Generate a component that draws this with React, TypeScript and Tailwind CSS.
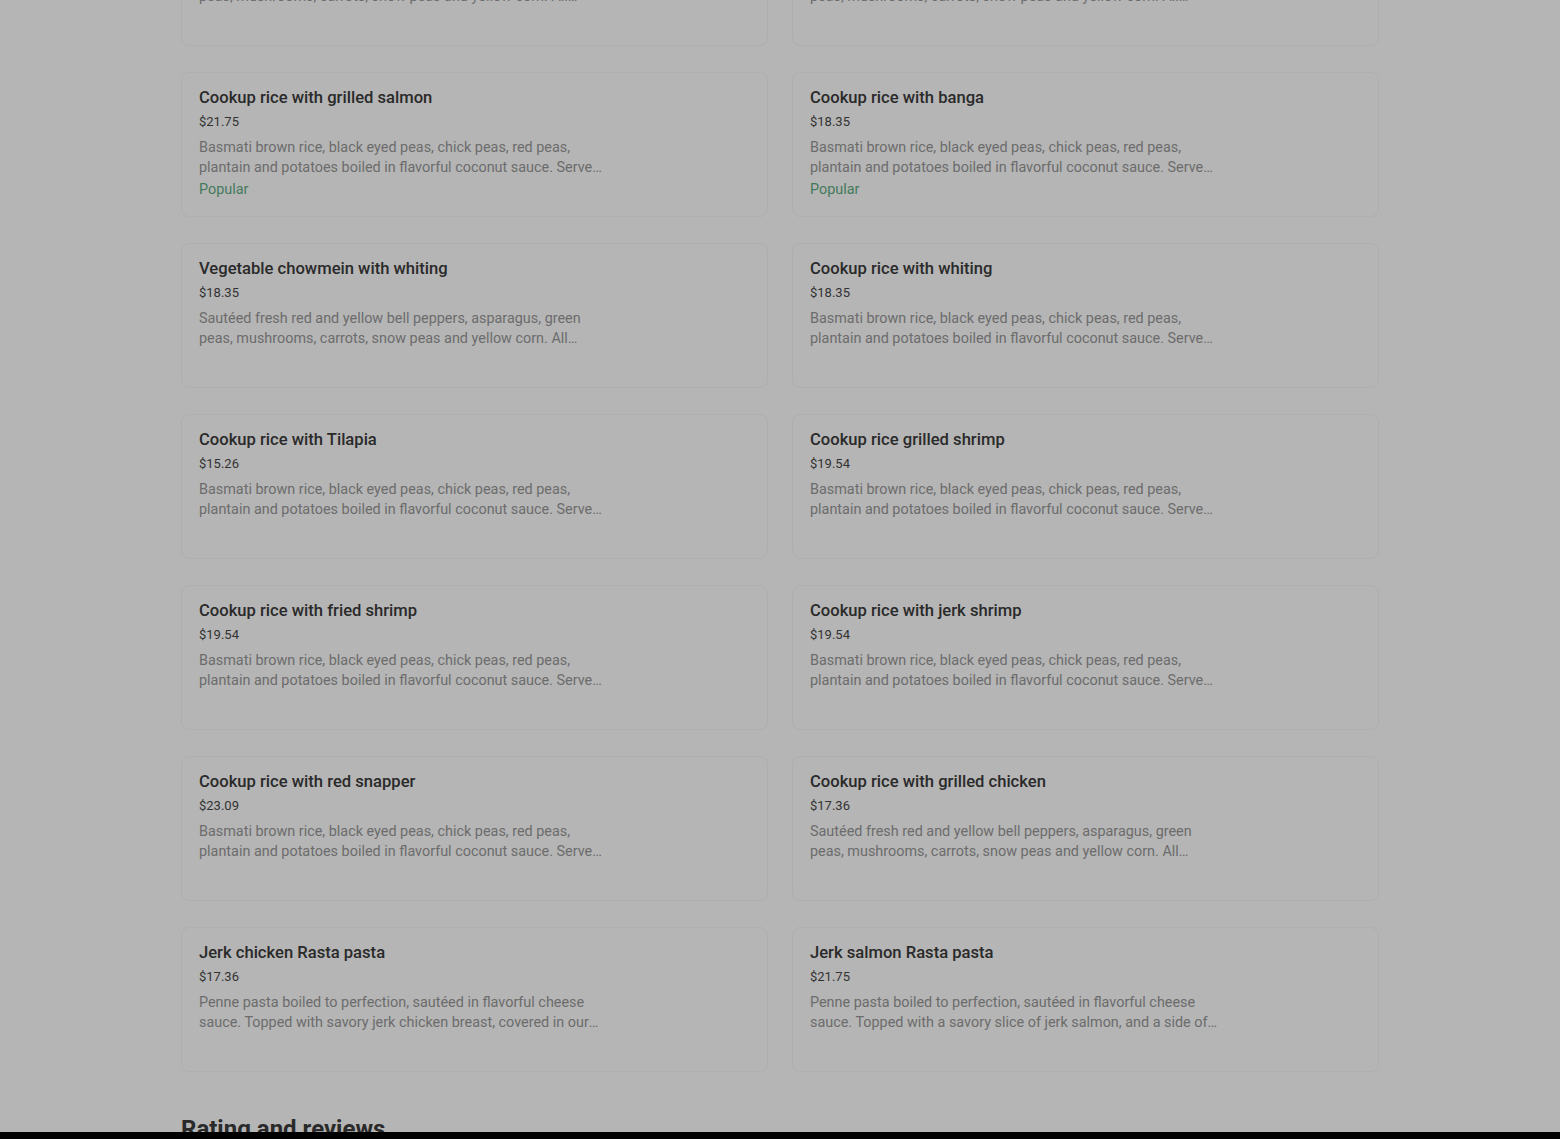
const BASMATI =
  'Basmati brown rice, black eyed peas, chick peas, red peas, plantain and potatoes boiled in flavorful coconut sauce. Served with steamed vegetables.';
const SAUTEED =
  'Sautéed fresh red and yellow bell peppers, asparagus, green peas, mushrooms, carrots, snow peas and yellow corn. All tossed in our house sauce.';

type Item = {
  name: string;
  price: string;
  desc: string;
  popular?: boolean;
};

const items: Item[] = [
  { name: 'Vegetable chowmein with salmon', price: '$21.75', desc: SAUTEED },
  { name: 'Vegetable chowmein with shrimp', price: '$19.54', desc: SAUTEED },
  { name: 'Cookup rice with grilled salmon', price: '$21.75', desc: BASMATI, popular: true },
  { name: 'Cookup rice with banga', price: '$18.35', desc: BASMATI, popular: true },
  { name: 'Vegetable chowmein with whiting', price: '$18.35', desc: SAUTEED },
  { name: 'Cookup rice with whiting', price: '$18.35', desc: BASMATI },
  { name: 'Cookup rice with Tilapia', price: '$15.26', desc: BASMATI },
  { name: 'Cookup rice grilled shrimp', price: '$19.54', desc: BASMATI },
  { name: 'Cookup rice with fried shrimp', price: '$19.54', desc: BASMATI },
  { name: 'Cookup rice with jerk shrimp', price: '$19.54', desc: BASMATI },
  { name: 'Cookup rice with red snapper', price: '$23.09', desc: BASMATI },
  { name: 'Cookup rice with grilled chicken', price: '$17.36', desc: SAUTEED },
  {
    name: 'Jerk chicken Rasta pasta',
    price: '$17.36',
    desc: 'Penne pasta boiled to perfection, sautéed in flavorful cheese sauce. Topped with savory jerk chicken breast, covered in our signature sauce.',
  },
  {
    name: 'Jerk salmon Rasta pasta',
    price: '$21.75',
    desc: 'Penne pasta boiled to perfection, sautéed in flavorful cheese sauce. Topped with a savory slice of jerk salmon, and a side of steamed vegetables.',
  },
];

function MenuCard({ item }: { item: Item }) {
  return (
    <div className="h-[145px] rounded-lg border border-[#afafaf] pl-[17px] pt-[13px]">
      <div className="w-[409px]">
        <h3 className="text-[16.6px] leading-6 font-medium text-[#2a2a2a]">
          {item.name}
        </h3>
        <p className="mt-[2px] text-[13px] leading-5 text-[#333333]">
          {item.price}
        </p>
        <p className="mt-[6px] line-clamp-2 text-[14.4px] leading-5 text-[#6c6c6c]">
          {item.desc}
        </p>
        {item.popular && (
          <p className="mt-[2px] text-[14.4px] leading-5 text-[#447a5c]">
            Popular
          </p>
        )}
      </div>
    </div>
  );
}

export default function App() {
  return (
    <div
      className="min-h-screen overflow-hidden bg-[#b5b5b5]"
      style={{ fontFamily: 'Roboto, "Liberation Sans", sans-serif' }}>
      <div className="mx-auto w-[1198px]">
        {/* Menu grid */}
        <div className="-mt-[99px] grid grid-cols-2 gap-x-6 gap-y-[26px]">
          {items.map((item) => (
            <MenuCard key={item.name} item={item} />
          ))}
        </div>

        {/* Reviews */}
        <h2 className="mt-[41px] text-[24px] leading-8 font-bold text-[#2a2a2a]">
          Rating and reviews
        </h2>
      </div>
      <div className="fixed inset-x-0 bottom-0 h-[7px] bg-black" />
    </div>
  );
}
